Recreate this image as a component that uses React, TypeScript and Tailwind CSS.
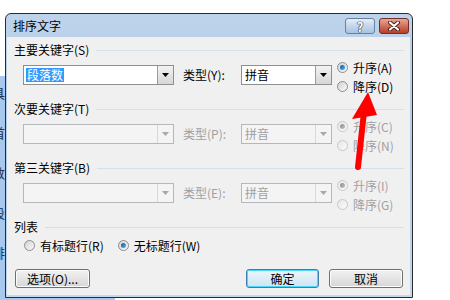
import React from 'react';

// ==================== 小部件 ====================

function Radio({ checked, disabled }: { checked?: boolean; disabled?: boolean }) {
  return (
    <span
      className={
        'flex items-center justify-center w-[11px] h-[11px] rounded-full border shrink-0 ' +
        (disabled
          ? 'border-[#c8c8c8] bg-gradient-to-br from-[#e6e6e6] to-[#fbfbfb]'
          : 'border-[#8c8c8c] bg-gradient-to-br from-[#d2d2d2] to-[#fafafa]')
      }
    >
      {checked && (
        <span
          className={
            'w-[5px] h-[5px] rounded-full ' +
            (disabled
              ? 'bg-gradient-to-br from-[#8a8a8a] to-[#c4c4c4]'
              : 'bg-gradient-to-br from-[#0d4f9a] to-[#4cc2f0]')
          }
        />
      )}
    </span>
  );
}

function RadioItem({ label, checked, disabled }: { label: string; checked?: boolean; disabled?: boolean }) {
  return (
    <div className="flex items-center h-[19px] gap-[5px]">
      <Radio checked={checked} disabled={disabled} />
      <span className={disabled ? 'text-[#a0a0a0]' : 'text-black'}>{label}</span>
    </div>
  );
}

function Arrow({ disabled }: { disabled?: boolean }) {
  return (
    <svg width="7" height="4" viewBox="0 0 7 4">
      <polygon points="0,0 7,0 3.5,4" fill={disabled ? '#a8a8a8' : '#000'} />
    </svg>
  );
}

function Combo({ width, text, selected, disabled }: { width: string; text?: string; selected?: boolean; disabled?: boolean }) {
  return (
    <div
      className={
        'flex h-[20px] border items-stretch ' +
        width +
        (disabled ? ' border-[#b5b8ba] bg-[#f4f4f4]' : ' border-[#8e8f8f] bg-white')
      }
    >
      <div className="flex-1 flex items-center pl-[2px] overflow-hidden">
        {text && (
          <span
            className={
              'px-[1px] leading-[14px] ' +
              (selected ? 'bg-[#3399ff] text-white' : disabled ? 'text-[#a0a0a0]' : 'text-black')
            }
          >
            {text}
          </span>
        )}
      </div>
      <div
        className={
          'w-[16px] flex items-center justify-center border-l ' +
          (disabled
            ? 'border-[#d8d8d8] bg-[#f4f4f4]'
            : 'border-[#9a9a9a] bg-gradient-to-b from-[#f3f3f3] to-[#d6d6d6]')
        }
      >
        <Arrow disabled={disabled} />
      </div>
    </div>
  );
}

function Header({ label }: { label: string }) {
  return (
    <div className="flex items-center h-[12px] pl-[7px]">
      <span className="leading-[12px] whitespace-nowrap">{label}</span>
      <div className="flex-1 ml-[7px] h-px bg-[#d5dfe5]" />
    </div>
  );
}

function Section({ label, typeLabel, asc, desc, text, typeText, disabled }: {
  label: string; typeLabel: string; asc: string; desc: string; text?: string; typeText: string; disabled?: boolean;
}) {
  return (
    <div className="h-[59px]">
      <Header label={label} />
      <div className="flex items-start mt-[2px]">
        <div className="flex items-center pt-[7px] pl-[16px]">
          <Combo width="w-[151px]" text={text} selected={!disabled} disabled={disabled} />
          <span className={'ml-[9px] w-[58px] ' + (disabled ? 'text-[#a0a0a0]' : 'text-black')}>{typeLabel}</span>
          <Combo width="w-[91px]" text={typeText} disabled={disabled} />
        </div>
        <div className="flex flex-col ml-[5px]">
          <RadioItem label={asc} checked disabled={disabled} />
          <RadioItem label={desc} disabled={disabled} />
        </div>
      </div>
    </div>
  );
}

function Btn({ label, width, focused }: { label: string; width: string; focused?: boolean }) {
  return (
    <div
      className={
        'h-[19px] flex items-center justify-center rounded-[3px] border ' +
        width +
        (focused
          ? ' border-[#3c7fb1] shadow-[inset_0_0_0_1px_#48d6fb] bg-gradient-to-b from-[#eaf6fd] to-[#cfe4f3]'
          : ' border-[#707070] shadow-[inset_0_0_0_1px_#fcfcfc] bg-gradient-to-b from-[#f2f2f2] to-[#d6d6d6]')
      }
    >
      {label}
    </div>
  );
}

// ==================== 页面 ====================

export default function App() {
  return (
    <div className="relative w-[450px] h-[300px] bg-white overflow-hidden font-['Noto_Sans_CJK_SC',sans-serif] text-[12px] text-black">
      {/* 背后的文档 */}
      <div className="absolute left-0 top-[76px] w-[5px] h-[224px] bg-[#a8c8ee] overflow-hidden text-[#23324a] text-[13px] leading-none">
        <div className="absolute left-[-8px] top-[10px]">具</div>
        <div className="absolute left-[-8px] top-[50px]">首</div>
        <div className="absolute left-[-8px] top-[90px]">数</div>
        <div className="absolute left-[-8px] top-[130px]">段</div>
        <div className="absolute left-[-8px] top-[170px]">排</div>
      </div>
      <div className="absolute left-[5px] top-[297px] w-[110px] h-[3px] bg-[#a8c8ee]" />

      {/* 对话框 */}
      <div className="absolute left-[5px] top-[13px] w-[408px] h-[285px] border border-[#2b2b2b] rounded-t-[6px] bg-gradient-to-b from-[#bdd3eb] via-[#b0cae6] to-[#c3d7ee] flex flex-col">
        {/* 标题栏 */}
        <div className="h-[23px] flex items-center pl-[7px] pr-[3px] shrink-0">
          <span className="flex-1 leading-none">排序文字</span>
          <div className="flex gap-[4px] mt-[1px]">
            <div className="w-[30px] h-[16px] rounded-[3px] border border-[#6b7f99] bg-gradient-to-b from-[#e4eef9] via-[#c3d6ed] to-[#a9c3e2] flex items-center justify-center text-white font-bold text-[13px] leading-none [text-shadow:0_0_1px_#1d2b3d,0_0_1px_#1d2b3d,0_0_1px_#1d2b3d]">
              ?
            </div>
            <div className="w-[30px] h-[16px] rounded-[3px] border border-[#6e3028] bg-gradient-to-b from-[#e8a597] via-[#d0705e] to-[#b83c28] flex items-center justify-center">
              <svg width="14" height="10" viewBox="0 0 14 10">
                <path d="M3 1.5 L11 8.5 M11 1.5 L3 8.5" stroke="#4a1c16" strokeWidth="4" strokeLinecap="round" />
                <path d="M3 1.5 L11 8.5 M11 1.5 L3 8.5" stroke="#fff" strokeWidth="2.2" strokeLinecap="round" />
              </svg>
            </div>
          </div>
        </div>

        {/* 客户区 */}
        <div className="flex-1 ml-px mr-[2px] mb-[2px] bg-[#f0f0f0] pt-[7px] pr-[6px] flex flex-col">
          <Section label="主要关键字(S)" typeLabel="类型(Y):" asc="升序(A)" desc="降序(D)" text="段落数" typeText="拼音" />
          <Section label="次要关键字(T)" typeLabel="类型(P):" asc="升序(C)" desc="降序(N)" typeText="拼音" disabled />
          <Section label="第三关键字(B)" typeLabel="类型(E):" asc="升序(I)" desc="降序(G)" typeText="拼音" disabled />

          <div className="h-[48px]">
            <Header label="列表" />
            <div className="flex items-center mt-[3px] pl-[17px]">
              <RadioItem label="有标题行(R)" />
              <div className="ml-[14px]">
                <RadioItem label="无标题行(W)" checked />
              </div>
            </div>
          </div>

          <div className="flex items-center pl-[8px] pr-[1px]">
            <Btn label="选项(O)..." width="w-[75px]" />
            <div className="flex-1" />
            <Btn label="确定" width="w-[73px]" focused />
            <div className="w-[10px]" />
            <Btn label="取消" width="w-[74px]" />
          </div>
        </div>
      </div>

      {/* 红色箭头 */}
      <svg className="absolute left-0 top-0 pointer-events-none" width="450" height="300">
        <line x1="364" y1="112" x2="358" y2="167" stroke="#ff0000" strokeWidth="6" strokeLinecap="round" />
        <polygon points="368,92 352,119 377,115" fill="#ff0000" />
      </svg>
    </div>
  );
}
